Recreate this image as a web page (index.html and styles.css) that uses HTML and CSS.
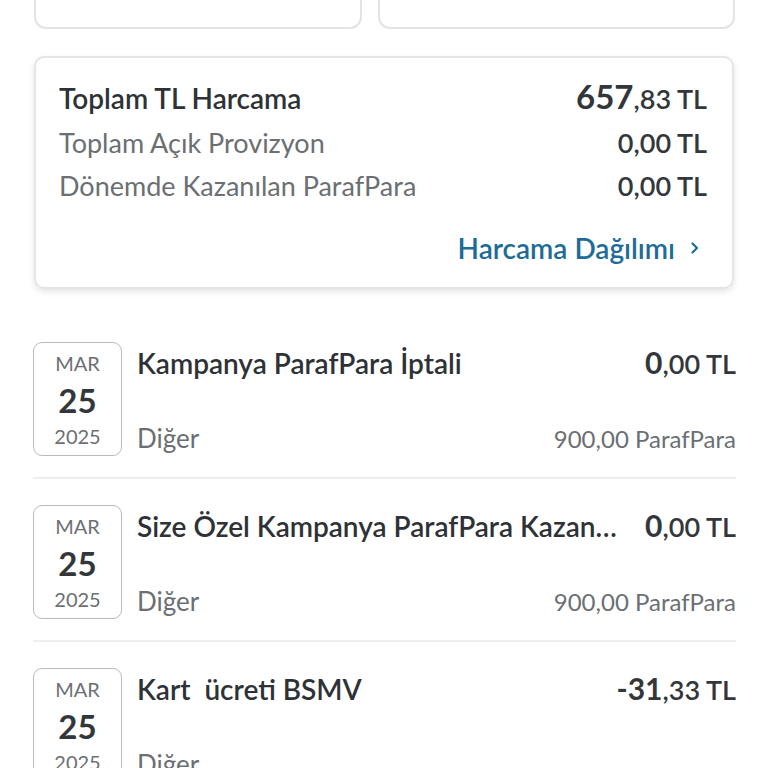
FILE: index.html
```html
<!DOCTYPE html>
<html lang="tr">
<head>
<meta charset="utf-8">
<link rel="stylesheet" href="styles.css">
</head>
<body>
<div class="page">
  <div class="top-cards">
    <div class="mini-card"></div>
    <div class="mini-card"></div>
  </div>

  <div class="summary">
    <div class="sum-row main">
      <span class="sum-label">Toplam TL Harcama</span>
      <span class="sum-value"><b class="big">657</b>,83 TL</span>
    </div>
    <div class="sum-row">
      <span class="sum-label muted">Toplam Açık Provizyon</span>
      <span class="sum-value">0,00 TL</span>
    </div>
    <div class="sum-row">
      <span class="sum-label muted">Dönemde Kazanılan ParafPara</span>
      <span class="sum-value">0,00 TL</span>
    </div>
    <div class="sum-link">
      <span>Harcama Dağılımı</span>
      <svg class="chev" width="12" height="14" viewBox="0 0 12 14"><path d="M3.5 2.5 L8 7 L3.5 11.5" fill="none" stroke="currentColor" stroke-width="2.2" stroke-linecap="round" stroke-linejoin="round"/></svg>
    </div>
  </div>

  <div class="tx-list">
    <div class="tx">
      <div class="date"><span class="mon">MAR</span><span class="day">25</span><span class="yr">2025</span></div>
      <div class="tx-body">
        <div class="tx-top">
          <span class="tx-title">Kampanya ParafPara İptali</span>
          <span class="tx-amt"><b>0</b>,00 TL</span>
        </div>
        <div class="tx-bot">
          <span class="tx-cat">Diğer</span>
          <span class="tx-pts">900,00 ParafPara</span>
        </div>
      </div>
    </div>
    <div class="tx">
      <div class="date"><span class="mon">MAR</span><span class="day">25</span><span class="yr">2025</span></div>
      <div class="tx-body">
        <div class="tx-top">
          <span class="tx-title">Size Özel Kampanya ParafPara Kazanımı</span>
          <span class="tx-amt"><b>0</b>,00 TL</span>
        </div>
        <div class="tx-bot">
          <span class="tx-cat">Diğer</span>
          <span class="tx-pts">900,00 ParafPara</span>
        </div>
      </div>
    </div>
    <div class="tx">
      <div class="date"><span class="mon">MAR</span><span class="day">25</span><span class="yr">2025</span></div>
      <div class="tx-body">
        <div class="tx-top">
          <span class="tx-title">Kart&nbsp; ücreti BSMV</span>
          <span class="tx-amt"><b>-31</b>,33 TL</span>
        </div>
        <div class="tx-bot">
          <span class="tx-cat">Diğer</span>
          <span class="tx-pts"></span>
        </div>
      </div>
    </div>
  </div>
</div>
</body>
</html>
```

FILE: styles.css
```css
* { box-sizing: border-box; }
html, body { margin: 0; padding: 0; background: #fff; }
body {
  font-family: "Lato", "Open Sans", "Liberation Sans", sans-serif;
  color: #33373b;
  overflow: hidden;
  height: 768px;
}
.page { padding: 0 33px 0 33px; }

.top-cards {
  display: grid;
  grid-template-columns: 328px 357px;
  gap: 16px;
  margin-top: -40px;
  padding-left: 1px;
}
.mini-card {
  height: 69px;
  border: 2px solid #e1e3e5;
  border-radius: 12px;
  background: #fff;
}

.summary {
  margin: 27px 1px 0 1px;
  height: 233px;
  border: 2px solid #e3e5e7;
  border-radius: 10px;
  box-shadow: 0 3px 6px rgba(0,0,0,0.10);
  padding: 17px 25px 0 23px;
  display: flex;
  flex-direction: column;
}
.sum-row {
  display: flex;
  justify-content: space-between;
  align-items: baseline;
  height: 43px;
  line-height: 43px;
  font-size: 27px;
}
.sum-row.main { height: 46px; font-size: 28px; }
.sum-label { font-weight: 600; color: #2e3236; }
.sum-label.muted { font-weight: 400; color: #6b6f73; }
.sum-value { font-weight: 600; color: #33373b; font-size: 27px; }
.sum-value .big { font-size: 33px; font-weight: 700; }
.sum-link {
  margin-top: 24px;
  align-self: flex-end;
  display: flex;
  align-items: center;
  gap: 14px;
  color: #1d6c98;
  font-size: 28px;
  font-weight: 600;
  padding-right: 6px;
}
.chev { display: block; }

.tx-list { margin-top: 53px; }
.tx {
  display: flex;
  gap: 15px;
  padding-bottom: 21px;
  border-bottom: 2px solid #eceeef;
  margin-bottom: 26px;
  margin-right: -1px;
}
.date {
  width: 89px;
  height: 114px;
  flex: none;
  border: 1.5px solid #b9bcbf;
  border-radius: 9px;
  display: flex;
  flex-direction: column;
  align-items: center;
  justify-content: space-between;
  padding: 5px 0 4px;
  color: #33373b;
}
.mon, .yr { font-size: 20px; color: #6b6f73; line-height: 30px; }
.day { font-size: 33px; font-weight: 700; line-height: 36px; }

.tx-body {
  flex: 1;
  min-width: 0;
  display: flex;
  flex-direction: column;
  justify-content: space-between;
  padding: 2px 0 2px;
}
.tx-top, .tx-bot {
  display: flex;
  justify-content: space-between;
  align-items: baseline;
  gap: 22px;
}
.tx-title {
  font-size: 28px;
  font-weight: 600;
  color: #2e3236;
  white-space: nowrap;
  overflow: hidden;
  text-overflow: ellipsis;
  min-width: 0;
}
.tx-amt { font-size: 27px; font-weight: 600; white-space: nowrap; color: #33373b; }
.tx-amt b { font-weight: 700; font-size: 30px; }
.tx-cat { font-size: 26px; color: #6b6f73; }
.tx-pts { font-size: 24px; color: #6b6f73; white-space: nowrap; }
```
